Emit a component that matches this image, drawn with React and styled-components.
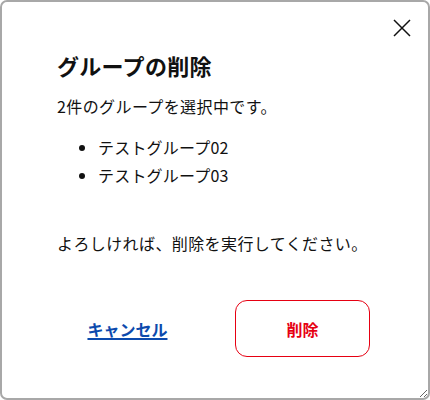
import React from "react";
import styled, { createGlobalStyle } from "styled-components";

const GlobalStyle = createGlobalStyle`
  html, body {
    margin: 0;
    padding: 0;
    background: #ffffff;
  }
  body {
    font-family: "Noto Sans CJK JP", "Noto Sans", sans-serif;
    color: #111111;
  }
  * {
    box-sizing: border-box;
  }
`;

const Dialog = styled.div`
  position: relative;
  width: 430px;
  height: 400px;
  border: 2px solid #a8a8a8;
  border-radius: 7px;
  background: #ffffff;
  padding: 47px 58px 0 55px;
  overflow: auto;
  resize: both;
`;

const CloseButton = styled.button`
  position: absolute;
  top: 14px;
  right: 14px;
  width: 24px;
  height: 24px;
  padding: 0;
  border: none;
  background: transparent;
  display: flex;
  align-items: center;
  justify-content: center;
  cursor: pointer;
`;

const Title = styled.h2`
  margin: 0;
  font-size: 22px;
  line-height: 32px;
  font-weight: 700;
  letter-spacing: 0.3px;
`;

const Text = styled.p`
  margin: ${(props) => props.$top || 0}px 0 0;
  font-size: 16px;
  line-height: 28px;
  letter-spacing: 0.4px;
`;

const GroupList = styled.ul`
  margin: 13px 0 0;
  padding-left: 41px;
  list-style: disc;
  li {
    font-size: 16px;
    line-height: 28px;
    letter-spacing: 0.2px;
  }
`;

const Actions = styled.div`
  display: flex;
  gap: 40px;
  margin-top: 43px;
  padding-left: 3px;
`;

const CancelLink = styled.a`
  width: 136px;
  height: 57px;
  display: flex;
  align-items: center;
  justify-content: center;
  color: #0c4aad;
  font-size: 16px;
  font-weight: 700;
  text-decoration: underline;
  text-decoration-thickness: 2px;
  text-underline-offset: 2px;
  cursor: pointer;
`;

const DeleteButton = styled.button`
  width: 136px;
  height: 57px;
  border: 1px solid #e60012;
  border-radius: 12px;
  background: #ffffff;
  color: #e60012;
  font-family: inherit;
  font-size: 16px;
  font-weight: 700;
  cursor: pointer;
`;

const CloseIcon = () => (
  <svg width="18" height="18" viewBox="0 0 18 18" fill="none">
    <path d="M1 1 L17 17 M17 1 L1 17" stroke="#111" strokeWidth="1.5" />
  </svg>
);

const groups = ["テストグループ02", "テストグループ03"];

export default function App() {
  return (
    <>
      <GlobalStyle />
      <Dialog>
        <CloseButton aria-label="閉じる">
          <CloseIcon />
        </CloseButton>
        <Title>グループの削除</Title>
        <Text $top={11}>{groups.length}件のグループを選択中です。</Text>
        <GroupList>
          {groups.map((g) => (
            <li key={g}>{g}</li>
          ))}
        </GroupList>
        <Text $top={40}>よろしければ、削除を実行してください。</Text>
        <Actions>
          <CancelLink>キャンセル</CancelLink>
          <DeleteButton>削除</DeleteButton>
        </Actions>
      </Dialog>
    </>
  );
}
